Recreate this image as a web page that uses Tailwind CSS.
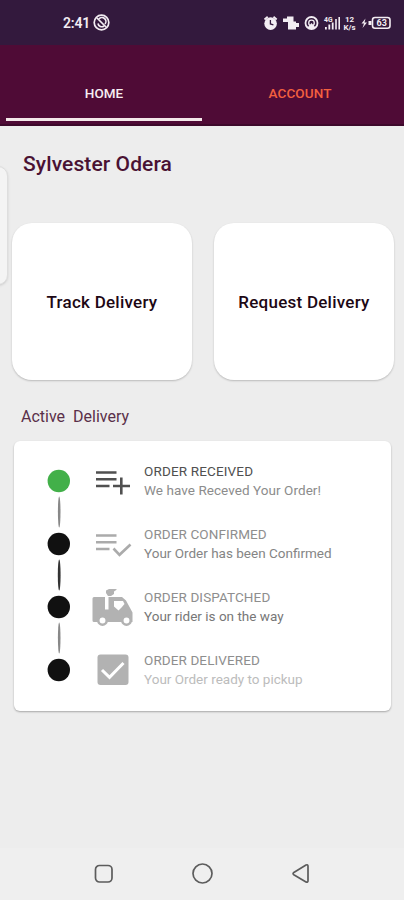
<!DOCTYPE html>
<html lang="en">
<head>
  <meta charset="UTF-8">
  <meta name="viewport" content="width=device-width, initial-scale=1.0">
  <title>Home - Delivery</title>
  <script src="https://cdn.jsdelivr.net/npm/@tailwindcss/browser@4"></script>
</head>
<body class="bg-[#ededed] font-['Roboto',sans-serif]">
  <div class="relative flex flex-col w-[404px] h-[900px] overflow-hidden">

    <!-- Status bar -->
    <div class="h-[45px] shrink-0 bg-[#33193d] flex items-center justify-between pl-[63px] pr-[13px] text-[#f3edf3]">
      <div class="flex items-center gap-[4px]">
        <span class="text-[14px] leading-4 font-semibold tracking-[-0.2px] w-[26px]">2:41</span>
        <svg class="w-[17px] h-[17px]" viewBox="0 0 17 17" fill="none" stroke="currentColor">
          <circle cx="8.5" cy="8.5" r="7.3" stroke-width="1.700"/>
          <path d="M5 9.500a3.800 3.800 0 006 2.500M6 5a3.900 3.900 0 016 5" stroke-width="1.700"/>
          <path d="M4 4l9 9" stroke-width="1.700"/>
        </svg>
      </div>
      <svg class="w-[129px] h-[18px]" viewBox="262 14 129 18" fill="currentColor">
        <!-- alarm -->
        <circle cx="270.6" cy="23.6" r="6.3"/>
        <path d="M264.5 19.5l3.2-2.8M276.7 19.5l-3.2-2.8" stroke="currentColor" stroke-width="1.8"/>
        <path d="M270.4 20v4l3 .8" fill="none" stroke="#33193d" stroke-width="1.3"/>
        <!-- vibrate -->
        <path d="M287 16.500h6.500v5H296v1.500h3v4h-3V29.500h-8V22h-5v-3.500h4z"/>
        <!-- hotspot -->
        <g fill="none" stroke="currentColor">
          <circle cx="311.500" cy="23" r="6" stroke-width="1.8"/>
          <circle cx="311.500" cy="23" r="2.800" stroke-width="1.300"/>
        </g>
        <path d="M308 27l3.500-4 3.500 4v2h-7z"/>
        <!-- signal -->
        <text x="324" y="21.500" font-size="7.500" font-weight="700" textLength="8.500" lengthAdjust="spacingAndGlyphs">4G</text>
        <path d="M325 27h1.800v2.500H325zM328.400 24.500h1.800v5h-1.800zM331.800 22.500h1.800v7h-1.800zM335.200 19h1.600v10.500h-1.600zM338.400 17h1.600v12.500h-1.600z"/>
        <!-- network speed -->
        <text x="345" y="22" font-size="8" font-weight="700">12</text>
        <text x="343.500" y="30" font-size="8" font-weight="700" textLength="12" lengthAdjust="spacingAndGlyphs">K/s</text>
        <!-- battery -->
        <path d="M365.500 18.500l-4 5h2.500l-1.500 4.500 4.500-5.500h-2.500z"/>
        <path d="M368.500 21h3v4h-3z"/>
        <rect x="372.500" y="17.500" width="17.500" height="10.800" rx="2.500" fill="none" stroke="currentColor" stroke-width="1.600"/>
        <text x="376.500" y="26.300" font-size="9" font-weight="700">63</text>
      </svg>
    </div>

    <!-- Tabs -->
    <div class="h-[80.500px] shrink-0 bg-[#4f0b36] grid grid-cols-2 px-[6px] border-b-2 border-[#3d092b] text-[13.5px] font-medium">
      <button class="flex flex-col items-center text-[#f6eef2]">
        <span class="mt-[40px] leading-4">HOME</span>
        <span class="mt-[17px] w-full h-[3px] bg-[#f4e9ea]"></span>
      </button>
      <button class="flex flex-col items-center text-[#f3603f]">
        <span class="mt-[40px] leading-4 tracking-[0.1px]">ACCOUNT</span>
      </button>
    </div>

    <!-- Edge panel handle -->
    <div class="absolute left-[-12px] top-[166px] w-[20px] h-[119px] rounded-[12px] bg-[#f4f4f4] border border-[#dedede] shadow-sm"></div>

    <h1 class="mt-[26px] ml-[23px] leading-6 text-[21px] font-medium tracking-[0.1px] text-[#4a1233]">Sylvester Odera</h1>

    <!-- Actions -->
    <div class="relative mt-[47px] ml-[12px] flex gap-[22px] text-[17px] font-medium text-[#1d0815]">
      <button class="w-[180px] h-[157px] pt-[3px] rounded-[20px] bg-white shadow-[0_1px_2px_rgba(0,0,0,0.22)] tracking-[0.25px]">Track Delivery</button>
      <button class="w-[180px] h-[157px] pt-[3px] rounded-[20px] bg-white shadow-[0_1px_2px_rgba(0,0,0,0.22)] tracking-[0.25px]">Request Delivery</button>
    </div>

    <h2 class="mt-[27px] ml-[21px] leading-5 text-[16px] text-[#5a3049]">Active&nbsp; Delivery</h2>

    <!-- Order timeline -->
    <div class="mt-[14px] ml-[14px] w-[377px] h-[270px] shrink-0 rounded-[6px] bg-white shadow-[0_1px_2px_rgba(0,0,0,0.3)] pt-[22px] pl-[33px] flex">
      <svg class="w-6 h-[230px] shrink-0" viewBox="0 0 24 230">
        <circle cx="11.800" cy="18" r="11.200" fill="#42b049"/>
        <circle cx="11.800" cy="81" r="11.200" fill="#111"/>
        <circle cx="11.800" cy="144" r="11.200" fill="#111"/>
        <circle cx="11.800" cy="207" r="11.200" fill="#111"/>
        <ellipse cx="12.200" cy="49" rx="1.300" ry="15.500" fill="#888"/>
        <ellipse cx="12.200" cy="112" rx="1.400" ry="15.500" fill="#333"/>
        <ellipse cx="12.200" cy="175" rx="1.300" ry="15.500" fill="#888"/>
      </svg>
      <div class="ml-[20px] flex flex-col text-[13.500px] leading-5 text-[#858585]">
        <div class="h-[63px] shrink-0 flex">
          <svg class="w-[44px] h-[42px] mr-[9px]" viewBox="91 463 44 42" fill="none" stroke="#505050" stroke-width="2.600">
            <path d="M96 472.500h20.500M96 479.300h20.500M96 486h13.500M113 486h17M121.300 477.500v17"/>
          </svg>
          <div>
            <p class="leading-[17px] tracking-[0.15px] text-[#505050]">ORDER RECEIVED</p>
            <p class="tracking-[0.06px] text-[#8c8c8c]">We have Receved Your Order!</p>
          </div>
        </div>
        <div class="h-[63px] shrink-0 flex">
          <svg class="w-[44px] h-[42px] mr-[9px]" viewBox="91 526 44 42" fill="none" stroke="#ababab" stroke-width="2.600">
            <path d="M96 535.500h20.500M96 542.300h20.500M96 549h13.500M113.500 548.500l6 6.300 11-10.300"/>
          </svg>
          <div>
            <p class="leading-[17px] tracking-[0.1px] text-[#8e8e8e]">ORDER CONFIRMED</p>
            <p>Your Order has been Confirmed</p>
          </div>
        </div>
        <div class="h-[63px] shrink-0 flex">
          <svg class="w-[44px] h-[42px] mr-[9px]" viewBox="91 589 44 42" fill="#b2b2b2">
            <path d="M94 597h11v12.500h3.500V597H122l4 3.500 6.500 12v9.500H94a1.500 1.500 0 01-1.500-1.500v-22A1.500 1.500 0 0194 597z"/>
            <path d="M114 601h9l1.500 3-3 3.500-3 3-4.500-4z" fill="#fff"/>
            <path d="M106 590.500l4-2h4l3 1-3 2v2.500l-3 2h-3l-2-3z"/>
            <circle cx="102.500" cy="620.500" r="4.200" fill="#fff" stroke="#b2b2b2" stroke-width="2.500"/>
            <circle cx="126.500" cy="620.500" r="4.200" fill="#fff" stroke="#b2b2b2" stroke-width="2.500"/>
          </svg>
          <div>
            <p class="leading-[17px] tracking-[0.1px] text-[#8e8e8e]">ORDER DISPATCHED</p>
            <p class="text-[#777]">Your rider is on the way</p>
          </div>
        </div>
        <div class="h-[63px] shrink-0 flex">
          <svg class="w-[44px] h-[42px] mr-[9px]" viewBox="91 652 44 42">
            <rect x="97.500" y="654.500" width="31" height="30.500" rx="3" fill="#b2b2b2"/>
            <path d="M102 670l7.500 7.300 14-14.300" fill="none" stroke="#fff" stroke-width="3"/>
          </svg>
          <div>
            <p class="leading-[17px] tracking-[0.1px] text-[#8e8e8e]">ORDER DELIVERED</p>
            <p class="text-[#bcbcbc]">Your Order ready to pickup</p>
          </div>
        </div>
      </div>
    </div>

    <!-- System navigation -->
    <div class="mt-auto h-[52px] shrink-0 bg-[#efefef] flex justify-between pl-[93px] pr-[92px] pt-[15px]">
      <svg class="w-[22px] h-[22px]" viewBox="0 0 22 22" fill="none" stroke="#5c5c5c" stroke-width="1.700">
        <rect x="2.500" y="2.500" width="16.500" height="16.500" rx="4"/>
      </svg>
      <svg class="w-[22px] h-[22px]" viewBox="0 0 22 22" fill="none" stroke="#5c5c5c" stroke-width="1.700">
        <circle cx="10.500" cy="10.500" r="9.500"/>
      </svg>
      <svg class="w-[22px] h-[22px]" viewBox="0 0 22 22" fill="none" stroke="#5c5c5c" stroke-width="1.700" stroke-linejoin="round">
        <path d="M3.800 9.400L16 2.100q2-1 2 1.200v14.500q0 2-2 1.100L3.800 11.700q-1.500-1.100 0-2.300z"/>
      </svg>
    </div>
  </div>
</body>
</html>
